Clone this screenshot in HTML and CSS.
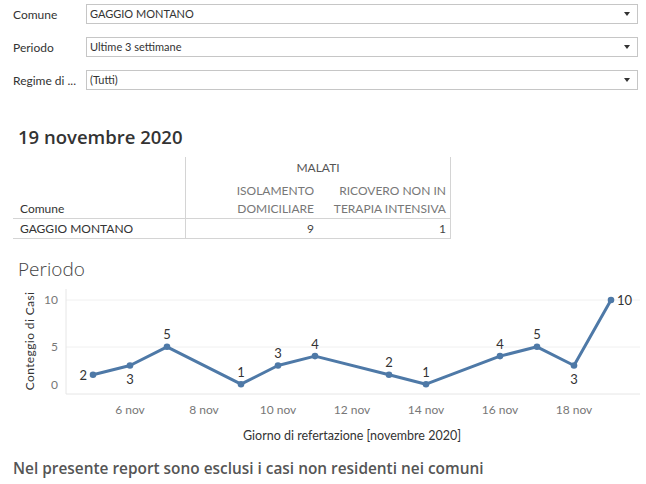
FILE: index.html
```html
<!DOCTYPE html>
<html lang="it">
<head>
    <meta charset="UTF-8">
    <meta name="viewport" content="width=device-width, initial-scale=1.0">
    <title>Report casi</title>
    <link rel="stylesheet" href="styles.css">
</head>
<body>
    <div class="filters">
        <div class="filter-row">
            <span class="filter-label">Comune</span>
            <div class="select">GAGGIO MONTANO</div>
        </div>
        <div class="filter-row">
            <span class="filter-label">Periodo</span>
            <div class="select">Ultime 3 settimane</div>
        </div>
        <div class="filter-row last">
            <span class="filter-label">Regime di ...</span>
            <div class="select">(Tutti)</div>
        </div>
    </div>

    <h2 class="date-title">19 novembre 2020</h2>

    <div class="cross-table">
        <div class="cell blank"></div>
        <div class="cell group">MALATI</div>
        <div class="cell row-head">Comune</div>
        <div class="cell col-head left">ISOLAMENTO<br>DOMICILIARE</div>
        <div class="cell col-head right">RICOVERO NON IN<br>TERAPIA INTENSIVA</div>
        <div class="cell name">GAGGIO MONTANO</div>
        <div class="cell num left">9</div>
        <div class="cell num right">1</div>
    </div>

    <h2 class="chart-title">Periodo</h2>

    <svg class="chart" width="646" height="170" viewBox="0 280 646 170">
        <!-- grid -->
        <line class="grid" x1="66" y1="299" x2="640" y2="299"/>
        <line class="grid" x1="66" y1="346" x2="640" y2="346"/>
        <line class="axis" x1="66" y1="393" x2="640" y2="393"/>
        <line class="axis" x1="66" y1="288" x2="66" y2="393"/>

        <text class="y-title" transform="translate(34 340) rotate(-90)">Conteggio di Casi</text>
        <text class="tick" x="58" y="303" text-anchor="end">10</text>
        <text class="tick" x="58" y="350" text-anchor="end">5</text>
        <text class="tick" x="58" y="388" text-anchor="end">0</text>

        <text class="tick" x="130" y="413" text-anchor="middle">6 nov</text>
        <text class="tick" x="204" y="413" text-anchor="middle">8 nov</text>
        <text class="tick" x="278" y="413" text-anchor="middle">10 nov</text>
        <text class="tick" x="352" y="413" text-anchor="middle">12 nov</text>
        <text class="tick" x="426" y="413" text-anchor="middle">14 nov</text>
        <text class="tick" x="500" y="413" text-anchor="middle">16 nov</text>
        <text class="tick" x="574" y="413" text-anchor="middle">18 nov</text>

        <text class="x-title" x="352" y="439" text-anchor="middle">Giorno di refertazione [novembre 2020]</text>

        <polyline class="series" points="93,373.8 130,364.5 167,345.8 241,383.2 278,364.5 315,355.1 389,373.8 426,383.2 500,355.1 537,345.8 574,364.5 611,299"/>
        <g class="dots">
            <circle cx="93" cy="373.8" r="3.3"/>
            <circle cx="130" cy="364.5" r="3.3"/>
            <circle cx="167" cy="345.8" r="3.3"/>
            <circle cx="241" cy="383.2" r="3.3"/>
            <circle cx="278" cy="364.5" r="3.3"/>
            <circle cx="315" cy="355.1" r="3.3"/>
            <circle cx="389" cy="373.8" r="3.3"/>
            <circle cx="426" cy="383.2" r="3.3"/>
            <circle cx="500" cy="355.1" r="3.3"/>
            <circle cx="537" cy="345.8" r="3.3"/>
            <circle cx="574" cy="364.5" r="3.3"/>
            <circle cx="611" cy="299" r="3.3"/>
        </g>
        <g class="labels">
            <text x="87" y="379" text-anchor="end">2</text>
            <text x="130" y="383" text-anchor="middle">3</text>
            <text x="167" y="338" text-anchor="middle">5</text>
            <text x="241" y="376" text-anchor="middle">1</text>
            <text x="278" y="357" text-anchor="middle">3</text>
            <text x="315" y="348" text-anchor="middle">4</text>
            <text x="389" y="366" text-anchor="middle">2</text>
            <text x="426" y="376" text-anchor="middle">1</text>
            <text x="500" y="348" text-anchor="middle">4</text>
            <text x="537" y="338" text-anchor="middle">5</text>
            <text x="574" y="383" text-anchor="middle">3</text>
            <text x="617" y="304">10</text>
        </g>
    </svg>

    <p class="note">Nel presente report sono esclusi i casi non residenti nei comuni</p>
</body>
</html>
```

FILE: styles.css
```css
* {
    margin: 0;
    padding: 0;
    box-sizing: border-box;
}

body {
    background: #fff;
    color: #333;
    font-family: 'Lato', 'Open Sans', sans-serif;
    width: 646px;
    height: 484px;
    overflow: hidden;
}

/* filters */
.filters {
    padding: 4px 8px 0 13px;
}

.filter-row {
    display: flex;
    align-items: center;
    height: 20px;
    margin-bottom: 13px;
}

.filter-row.last {
    margin-top: 2px;
    margin-bottom: 0;
}

.filter-label {
    width: 73px;
    font-size: 12px;
    color: #333;
    white-space: nowrap;
}

.select {
    position: relative;
    flex: 1;
    height: 20px;
    line-height: 18px;
    border: 1px solid #c6c6c6;
    padding-left: 3px;
    font-size: 11px;
    color: #333;
}

.select::after {
    content: '';
    position: absolute;
    right: 7px;
    top: 7px;
    border-left: 3.5px solid transparent;
    border-right: 3.5px solid transparent;
    border-top: 4px solid #333;
}

/* date + table */
.date-title {
    margin: 36px 0 0 18px;
    font-family: 'Open Sans', 'Lato', sans-serif;
    font-size: 18.5px;
    line-height: 22px;
    font-weight: 600;
    color: #333;
}

.cross-table {
    display: grid;
    grid-template-columns: 172px 133px 133px;
    margin: 9px 0 0 13px;
    width: 438px;
    font-size: 12px;
}

.cell {
    white-space: nowrap;
}

.blank {
    height: 22px;
}

.group {
    grid-column: 2 / 4;
    text-align: center;
    color: #555;
    line-height: 22px;
    border-left: 1px solid #d4d4d4;
    border-right: 1px solid #d4d4d4;
}

.row-head {
    display: flex;
    align-items: flex-end;
    padding-left: 7px;
    line-height: 18px;
    border-bottom: 1px solid #d4d4d4;
}

.col-head {
    text-align: right;
    color: #777;
    line-height: 18px;
    padding: 3px 4px 0 0;
    border-bottom: 1px solid #d4d4d4;
}

.left {
    border-left: 1px solid #d4d4d4;
}

.right {
    border-right: 1px solid #d4d4d4;
}

.name {
    padding-left: 7px;
    line-height: 19px;
    border-bottom: 1px solid #d4d4d4;
}

.num {
    text-align: right;
    line-height: 19px;
    padding-right: 4px;
    color: #444;
    border-bottom: 1px solid #d4d4d4;
}

/* chart */
.chart-title {
    margin: 18px 0 0 18px;
    font-family: 'Open Sans', 'Lato', sans-serif;
    font-size: 19px;
    line-height: 24px;
    font-weight: 300;
    color: #444;
}

.chart {
    display: block;
    font-family: 'Lato', 'Open Sans', sans-serif;
}

.grid {
    stroke: #f0f0f0;
    stroke-width: 1;
}

.axis {
    stroke: #e6e6e6;
    stroke-width: 1;
}

.tick {
    font-size: 12px;
    fill: #777;
}

.y-title,
.x-title {
    font-size: 12px;
    fill: #333;
}

.x-title {
    font-size: 12.5px;
}

.y-title {
    text-anchor: middle;
    letter-spacing: 0.4px;
}

.series {
    fill: none;
    stroke: #4e79a7;
    stroke-width: 3;
    stroke-linejoin: round;
}

.dots circle {
    fill: #4e79a7;
}

.labels text {
    font-size: 13px;
    fill: #333;
}

.note {
    margin: 8px 0 0 13px;
    font-family: 'Open Sans', 'Lato', sans-serif;
    font-size: 15.4px;
    line-height: 20px;
    font-weight: 600;
    color: #555;
}
```
